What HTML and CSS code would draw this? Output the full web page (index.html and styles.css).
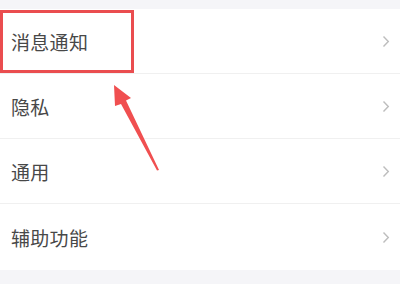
FILE: index.html
```html
<!DOCTYPE html>
<html lang="zh">
<head>
<meta charset="utf-8">
<link rel="stylesheet" href="styles.css">
</head>
<body>
<div class="page">
  <div class="band-top"></div>
  <ul class="list">
    <li class="row"><span class="label">消息通知</span><svg class="chev" viewBox="0 0 8 13"><path d="M1.5 1.5 L6.3 6.5 L1.5 11.5" /></svg></li>
    <li class="row"><span class="label">隐私</span><svg class="chev" viewBox="0 0 8 13"><path d="M1.5 1.5 L6.3 6.5 L1.5 11.5" /></svg></li>
    <li class="row"><span class="label">通用</span><svg class="chev" viewBox="0 0 8 13"><path d="M1.5 1.5 L6.3 6.5 L1.5 11.5" /></svg></li>
    <li class="row last"><span class="label">辅助功能</span><svg class="chev" viewBox="0 0 8 13"><path d="M1.5 1.5 L6.3 6.5 L1.5 11.5" /></svg></li>
  </ul>
  <div class="band-bottom"></div>
  <div class="highlight"></div>
  <svg class="arrow" viewBox="0 0 400 300">
    <polygon points="114,85 131,98 126,100.5 159,170 157,170.5 121,104 115,106" />
  </svg>
</div>
</body>
</html>
```
FILE: styles.css
```css
html, body {
  margin: 0;
  padding: 0;
  background: #ffffff;
}
.page {
  position: relative;
  width: 400px;
  height: 300px;
  overflow: hidden;
  font-family: "Noto Sans CJK SC", "Noto Sans", sans-serif;
}
.band-top {
  height: 9px;
  background: #f5f5f8;
}
.list {
  list-style: none;
  margin: 0;
  padding: 0;
  background: #ffffff;
}
.row {
  height: 64px;
  border-bottom: 1px solid #f0f0f0;
  display: flex;
  align-items: center;
  justify-content: space-between;
  padding: 0 10px 0 11px;
}
.row.last {
  height: 66px;
  border-bottom: none;
}
.label {
  font-size: 19px;
  color: #484848;
  letter-spacing: 0.3px;
  line-height: 1;
  padding-top: 1px;
}
.chev {
  width: 8px;
  height: 13px;
  fill: none;
  stroke: #bdbdbd;
  stroke-width: 1.4;
}
.band-bottom {
  height: 14px;
  background: #f5f5f8;
}
.highlight {
  position: absolute;
  left: 0;
  top: 10px;
  width: 128px;
  height: 57px;
  border: 3px solid #ea4d4f;
}
.arrow {
  position: absolute;
  left: 0;
  top: 0;
  width: 400px;
  height: 300px;
  fill: #f04f50;
}
```
